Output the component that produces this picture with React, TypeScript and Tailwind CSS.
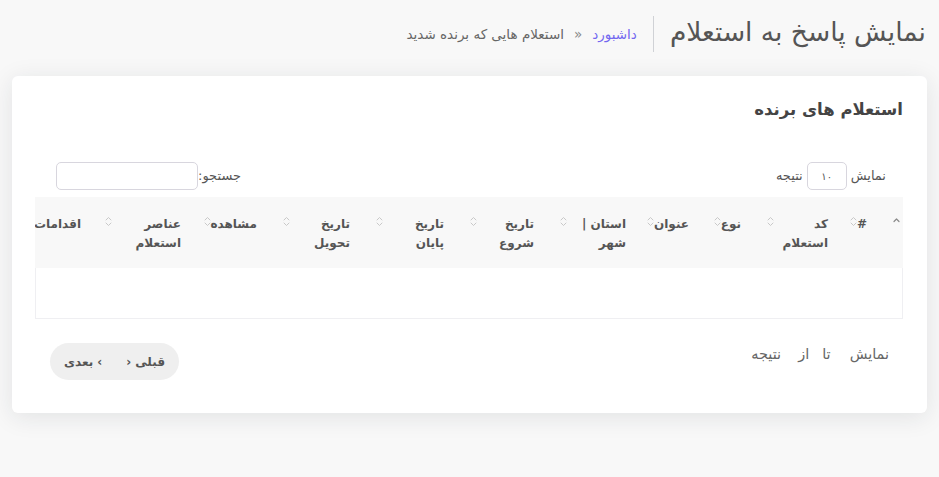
import React from "react";

function SortIcon() {
  return (
    <svg width="7" height="11" viewBox="0 0 7 11" className="shrink-0 mt-[1px]" fill="none" stroke="#c9c9c9" strokeWidth="1" strokeLinecap="round" strokeLinejoin="round">
      <path d="M1 4 L3.5 1.5 L6 4" />
      <path d="M1 7 L3.5 9.5 L6 7" />
    </svg>
  );
}

function UpIcon() {
  return (
    <svg width="7" height="11" viewBox="0 0 7 11" className="shrink-0 mt-[1px]" fill="none" stroke="#8a8a8a" strokeWidth="1.2" strokeLinecap="round" strokeLinejoin="round">
      <path d="M1 4.5 L3.5 2 L6 4.5" />
    </svg>
  );
}

const cols: { lines: string[]; w: string }[] = [
  { lines: ["#"], w: "w-[39px]" },
  { lines: ["کد", "استعلام"], w: "w-[87px]" },
  { lines: ["نوع"], w: "w-[52px]" },
  { lines: ["عنوان"], w: "w-[63px]" },
  { lines: ["استان |", "شهر"], w: "w-[92px]" },
  { lines: ["تاریخ", "شروع"], w: "w-[90px]" },
  { lines: ["تاریخ", "پایان"], w: "w-[94px]" },
  { lines: ["تاریخ", "تحویل"], w: "w-[93px]" },
  { lines: ["مشاهده"], w: "w-[76px]" },
  { lines: ["عناصر", "استعلام"], w: "w-[102px]" },
];

export default function App() {
  return (
    <div dir="rtl" className="min-h-[477px] w-full bg-[#f8f8f8] font-['DejaVu_Sans',sans-serif] pb-[64px]">
      {/* page header */}
      <div className="flex items-center px-[13px] pt-[16px]">
        <h2 className="h-[36px] flex items-center border-l border-[#d0d2d6] pl-[16px] pb-[4px] text-[26.5px] font-medium text-[#555] leading-none whitespace-nowrap">
          نمایش پاسخ به استعلام
        </h2>
        <div className="flex items-center pr-[16px] text-[13.5px] text-[#666] whitespace-nowrap">
          <span className="text-[#7367f0]">داشبورد</span>
          <span className="mx-[10px] text-[#888]">«</span>
          <span>استعلام هایی که برنده شدید</span>
        </div>
      </div>

      {/* card */}
      <div className="mx-[12px] mt-[24px] rounded-[6px] bg-white shadow-[0_4px_24px_0_rgba(34,41,47,0.1)] pt-[23px] pb-[33px] pr-[24px] pl-[23px]">
        <h4 className="text-[16.5px] font-bold text-[#444] leading-[22px]">استعلام های برنده</h4>

        <div className="mt-[41px] flex items-center justify-between pr-[17px] pl-[21px] text-[13px] text-[#555]">
          <div className="flex items-center gap-[4px]">
            <span>نمایش</span>
            <div className="w-[40px] h-[28px] rounded-[5px] border border-[#d8d6de] flex items-center justify-center text-[10px] text-[#555]">۱۰</div>
            <span>نتیجه</span>
          </div>
          <div className="flex items-center">
            <span>جستجو:</span>
            <div className="w-[142px] h-[28px] rounded-[5px] border border-[#d8d6de] bg-white" />
          </div>
        </div>

        <div className="mt-[7px] overflow-hidden">
          <div className="flex bg-[#f8f8f8] h-[71px] text-[12px] font-bold text-[#555] leading-[19px]">
            <div className="w-[20px] shrink-0 flex items-start justify-end pl-[10px] pt-[19px]">
              <UpIcon />
            </div>
            {cols.map((c, i) => (
              <div key={i} className={`${c.w} shrink-0 flex items-start justify-between pr-[16px] pl-[10px] pt-[18px]`}>
                <div className="whitespace-nowrap">
                  {c.lines.map((l, j) => (
                    <div key={j}>{l}</div>
                  ))}
                </div>
                <SortIcon />
              </div>
            ))}
            <div className="w-[80px] shrink-0 flex items-start pr-[14px] pt-[18px] whitespace-nowrap">اقدامات</div>
          </div>
          <div className="h-[51px] bg-white border-x border-b border-[#efeff2]" />
        </div>

        <div className="mt-[24px] flex items-start justify-between pr-[14px] pl-[15px]">
          <div className="flex items-center gap-[13px] pt-[1px] text-[14.5px] text-[#666] whitespace-nowrap">
            <span className="ml-[6px]">نمایش</span>
            <span>تا</span>
            <span>از</span>
            <span className="mr-[4px]">نتیجه</span>
          </div>
          <div className="w-[129px] h-[37px] rounded-full bg-[#efefef] flex items-center justify-between px-[14px] text-[12px] font-bold text-[#555]">
            <div className="flex items-center gap-[4px]">
              <span>قبلی</span>
              <span className="text-[12px]">‹</span>
            </div>
            <div className="flex items-center gap-[4px]">
              <span className="text-[12px]">›</span>
              <span>بعدی</span>
            </div>
          </div>
        </div>
      </div>
    </div>
  );
}
